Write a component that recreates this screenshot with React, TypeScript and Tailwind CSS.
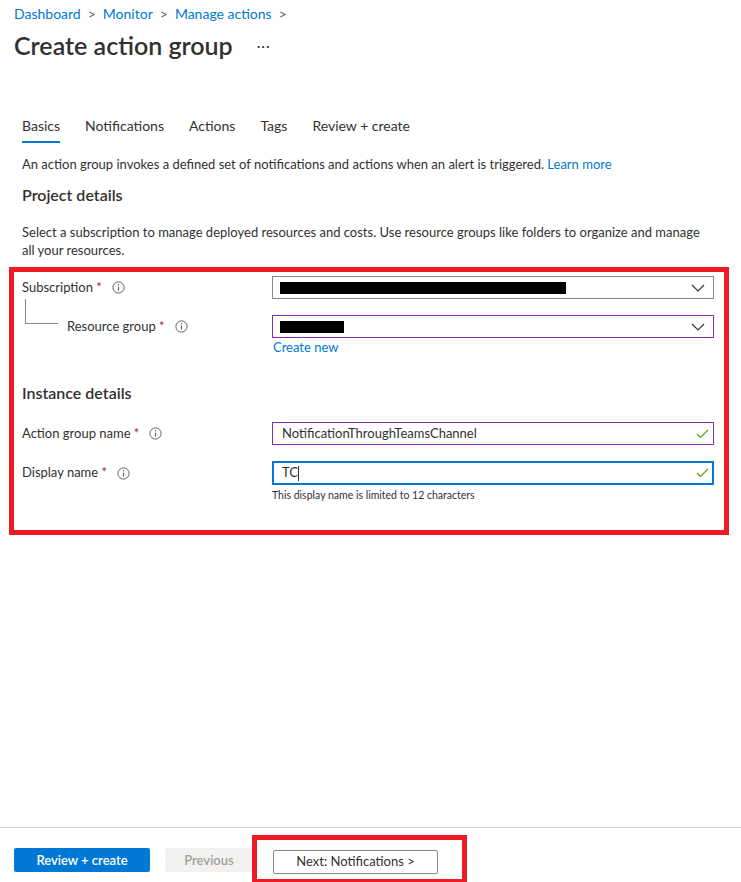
import React from "react";

const InfoIcon = () => (
  <svg width="13" height="13" viewBox="0 0 13 13" className="shrink-0">
    <circle cx="6.5" cy="6.5" r="5.6" fill="none" stroke="#605e5c" strokeWidth="1" />
    <line x1="6.5" y1="5.6" x2="6.5" y2="9.6" stroke="#605e5c" strokeWidth="1.1" />
    <circle cx="6.5" cy="3.8" r="0.7" fill="#605e5c" />
  </svg>
);

const Chevron = () => (
  <svg width="14" height="8" viewBox="0 0 14 8" className="shrink-0">
    <polyline points="1,1 7,7 13,1" fill="none" stroke="#323130" strokeWidth="1.1" />
  </svg>
);

const Check = () => (
  <svg width="13" height="10" viewBox="0 0 13 10" className="shrink-0">
    <polyline points="1,5 4.5,8.5 12,1" fill="none" stroke="#57a300" strokeWidth="1.1" />
  </svg>
);

const Label = ({ text, className = "" }: { text: string; className?: string }) => (
  <div className={`flex items-center gap-[10px] text-[13px] text-[#323130] ${className}`}>
    <span>
      {text} <span className="text-[#a4262c]">*</span>
    </span>
    <InfoIcon />
  </div>
);

const tabs = ["Basics", "Notifications", "Actions", "Tags", "Review + create"];

export default function App() {
  return (
    <div className="h-screen flex flex-col bg-white text-[#323130] font-['Segoe_UI',Lato,sans-serif] overflow-hidden">
      <div className="flex-1">
        {/* header */}
        <div className="px-[14px]">
          <div className="flex items-center gap-[7px] text-[14px] text-[#0078d4] h-[28px] -mt-[1px]">
            <span>Dashboard</span>
            <span className="text-[#605e5c]">&gt;</span>
            <span>Monitor</span>
            <span className="text-[#605e5c]">&gt;</span>
            <span>Manage actions</span>
            <span className="text-[#605e5c]">&gt;</span>
          </div>
          <div className="flex items-center h-[37px]">
            <h1 className="text-[25px] font-semibold text-[#323130] leading-none">Create action group</h1>
            <span className="ml-[24px] text-[14px] tracking-[1px] text-[#323130]">···</span>
          </div>
        </div>

        <div className="px-[22px] pt-[52px]">
          {/* tabs */}
          <div className="flex gap-[25px] text-[14px] text-[#323130]">
            {tabs.map((t, i) => (
              <div key={t} className="flex flex-col">
                <span className="leading-[20px]">{t}</span>
                <span className={`mt-[5px] h-[2px] ${i === 0 ? "bg-[#0078d4]" : "bg-transparent"}`} />
              </div>
            ))}
          </div>

          <p className="mt-[12px] text-[13px] leading-[18px]">
            An action group invokes a defined set of notifications and actions when an alert is triggered.{" "}
            <span className="text-[#0078d4]">Learn more</span>
          </p>

          <h2 className="mt-[11px] text-[16px] font-semibold leading-[22px]">Project details</h2>

          <p className="mt-[17px] text-[13px] leading-[18px] max-w-[690px]">
            Select a subscription to manage deployed resources and costs. Use resource groups like folders to organize
            and manage all your resources.
          </p>

          {/* highlighted section */}
          <div className="mt-[8px] -ml-[13px] -mr-[10px] border-[5px] border-[#ed1c24] pl-[8px] pr-[10px] pt-[4px] pb-[28px]">
            <div className="flex items-center h-[23px]">
              <Label text="Subscription" className="w-[250px]" />
              <div className="flex-1 h-[23px] border border-[#8a8886] flex items-center pl-[7px] pr-[8px]">
                <div className="w-[286px] h-[12px] bg-black" />
                <div className="flex-1" />
                <Chevron />
              </div>
            </div>

            <div className="flex mt-[16px]">
              <div className="w-[250px] relative">
                <div className="absolute left-[3px] -top-[16px] w-[33px] h-[25px] border-l border-b border-[#8a8886]" />
                <Label text="Resource group" className="pl-[45px] h-[23px]" />
              </div>
              <div className="flex-1">
                <div className="h-[23px] border border-[#8a2ca8] flex items-center pl-[7px] pr-[8px]">
                  <div className="w-[64px] h-[12px] bg-black" />
                  <div className="flex-1" />
                  <Chevron />
                </div>
                <div className="text-[13px] leading-[18px] text-[#0078d4] pl-[1px]">Create new</div>
              </div>
            </div>

            <h2 className="mt-[26px] text-[16px] font-semibold leading-[22px]">Instance details</h2>

            <div className="flex items-center mt-[18px] h-[23px]">
              <Label text="Action group name" className="w-[250px]" />
              <div className="flex-1 h-[23px] border border-[#8a2ca8] flex items-center pl-[9px] pr-[4px] text-[13px]">
                <span className="flex-1">NotificationThroughTeamsChannel</span>
                <Check />
              </div>
            </div>

            <div className="flex mt-[16px]">
              <Label text="Display name" className="w-[250px] h-[24px]" />
              <div className="flex-1">
                <div className="h-[24px] border-2 border-[#0078d4] flex items-center pl-[8px] pr-[3px] text-[13px]">
                  <span>TC</span>
                  <span className="w-[1px] h-[15px] bg-[#323130]" />
                  <span className="flex-1" />
                  <Check />
                </div>
                <div className="mt-[3px] text-[10.5px] leading-[14px] text-[#323130]">
                  This display name is limited to 12 characters
                </div>
              </div>
            </div>
          </div>
        </div>
      </div>

      {/* footer */}
      <div className="h-[55px] border-t border-[#d2d0ce] flex items-start px-[14px] pt-[7px] shrink-0">
        <button className="mt-[13px] w-[136px] h-[24px] bg-[#0078d4] text-white text-[13px] font-semibold rounded-[2px] leading-[20px]">
          Review + create
        </button>
        <button className="mt-[13px] ml-[15px] w-[88px] h-[24px] bg-[#f3f2f1] text-[#a19f9d] text-[13px] font-semibold rounded-[2px] leading-[20px]">
          Previous
        </button>
        <div className="-ml-[1px] border-[5px] border-[#ed1c24] pl-[16px] pr-[24px] pt-[8px] pb-[5px]">
          <button className="w-[165px] h-[24px] bg-white border border-[#8a8886] text-[#323130] text-[13px] rounded-[2px] leading-[18px] pb-[2px]">
            Next: Notifications &gt;
          </button>
        </div>
      </div>
    </div>
  );
}
